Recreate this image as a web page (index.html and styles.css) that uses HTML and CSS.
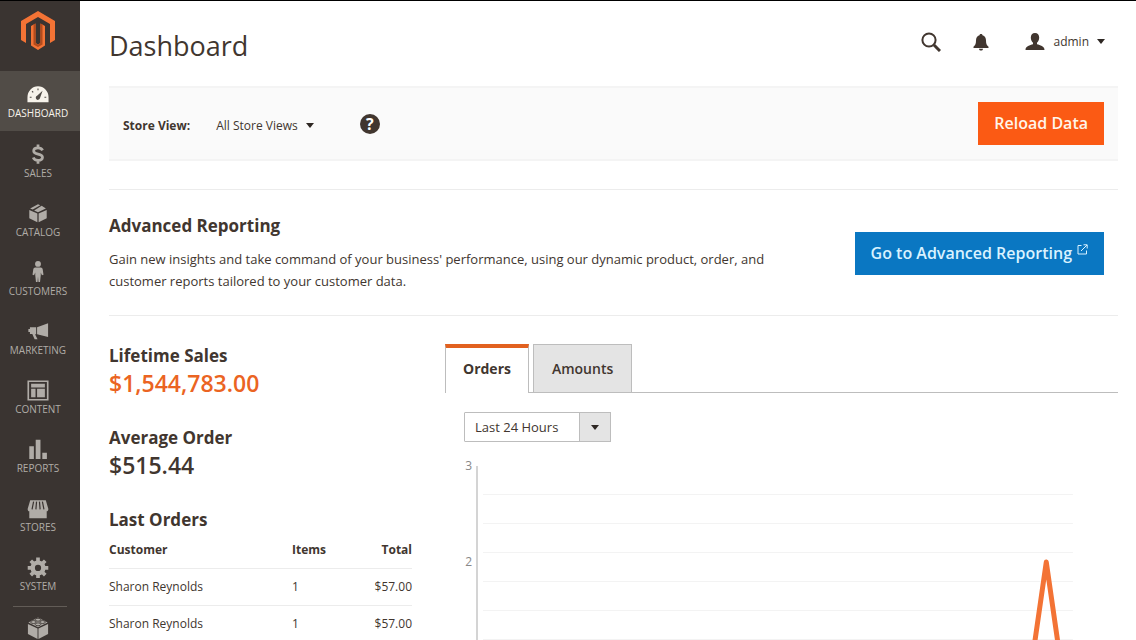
FILE: index.html
```html
<!DOCTYPE html>
<html lang="en">
<head>
<meta charset="utf-8">
<meta name="viewport" content="width=device-width, initial-scale=1">
<title>Dashboard</title>
<link rel="stylesheet" href="styles.css">
</head>
<body>
<div class="app">
  <nav class="sidebar" aria-label="Main menu">
    <a class="logo" href="#" aria-label="Home">
      <svg width="36" height="40" viewBox="0 0 36 40">
        <path fill="#f37335" d="M18 0 35 10V29L30 32V13L18 6 6 13V32L1 29V10Z"/>
        <path fill="#f37335" d="M11 15 15.500 12.500V32L18 33.500 20.500 32V12.500L25 15V34.500L18 39 11 34.500Z"/>
        <path fill="#b34a1c" d="M13.500 13.500 15.500 12.500V32L18 33.500V36L13.500 33.500ZM22.500 13.500 20.500 12.500V32L18 33.500V36L22.500 33.500Z"/>
      </svg>
    </a>
    <ul class="menu">
      <li><a class="menu-item active" href="#">
        <svg class="icon" viewBox="0 0 24 24"><path fill="currentColor" d="M.5 21v-5.500a11.500 12 0 0 1 23 0V21Z"/><path stroke="#514c47" stroke-width="1.200" fill="none" d="M3 15.500h2M5.500 9l1.300 1.300M12 6v2M19 15.500h2"/><path fill="#514c47" d="M17 8.500 14 17a2.300 2.300 0 1 1-3-3Z"/></svg>
        <span>Dashboard</span></a></li>
      <li><a class="menu-item" href="#">
        <svg class="icon" viewBox="0 0 24 24"><path fill="none" stroke="currentColor" stroke-width="3" d="M17 8C16 6 14 5.300 12 5.300 9.300 5.300 7.300 6.600 7.300 8.700c0 4.600 9.600 2.200 9.600 6.800 0 2.200-2 3.400-4.900 3.400-2.500 0-4.400-.9-5.200-3M12 1.500v4M12 18.500v4"/></svg>
        <span>Sales</span></a></li>
      <li><a class="menu-item" href="#">
        <svg class="icon" viewBox="0 0 24 24"><path fill="currentColor" d="M2.500 8.800 11.300 12.600V22L2.500 17.600ZM12.700 12.600 21.500 8.800V17.600L12.700 22ZM12 2.500 14.500 3.600 6.200 8.300 3.400 7.200ZM16 4.200 20.600 7.200 12 11.300 7.800 9.200Z"/></svg>
        <span>Catalog</span></a></li>
      <li><a class="menu-item" href="#">
        <svg class="icon" viewBox="0 0 24 24"><circle cx="12" cy="3.200" r="3.200" fill="currentColor"/><path fill="currentColor" d="M9 7h6c1.500 0 2 1 2.200 2.500l.8 5.500-1.700.5-1.300-3V15.500l-.8 7.500h-1.700L12 17l-.5 6H9.800L9 15.500v-3l-1.300 3-1.700-.5.800-5.500C7 8 7.500 7 9 7Z"/></svg>
        <span>Customers</span></a></li>
      <li><a class="menu-item" href="#">
        <svg class="icon" viewBox="0 0 24 24"><path fill="currentColor" d="M23 3.500v15L11 15.600V8ZM10 8v7.500H8.800l2.700 5.500H8.300L5.800 15.300H3.200V13H1.500V9.800H3.200V8Z"/></svg>
        <span>Marketing</span></a></li>
      <li><a class="menu-item" href="#">
        <svg class="icon" viewBox="0 0 24 24"><path fill="none" stroke="currentColor" stroke-width="1.800" d="M1.400 2.400h21.200v20.200H1.400Z"/><path fill="currentColor" d="M4.500 5.200h15v4h-15ZM4.500 10.700h4.800V19.800H4.500ZM11 10.700h8.500V19.800H11Z"/></svg>
        <span>Content</span></a></li>
      <li><a class="menu-item" href="#">
        <svg class="icon" viewBox="0 0 24 24"><path fill="currentColor" d="M2.500 9h5v14h-5ZM9.500 2h5.200v21H9.500ZM16.700 16h5V23h-5Z"/></svg>
        <span>Reports</span></a></li>
      <li><a class="menu-item" href="#">
        <svg class="icon" viewBox="0 0 24 24"><path fill="currentColor" d="M3.500 3.500h17l2.800 9.500c0 1.600-1 2.500-1.800 2.500v7.700h-19v-7.700C1.500 15.500.7 14.500.7 13Z"/><path fill="none" stroke="#3a3431" stroke-width="1.300" d="M7.200 5 5.500 13.500M10.400 5l-.7 8.500M13.600 5l.7 8.500M16.800 5l1.700 8.500"/></svg>
        <span>Stores</span></a></li>
      <li><a class="menu-item" href="#">
        <svg class="icon" viewBox="0 0 24 24"><circle cx="12" cy="13" r="5.800" fill="none" stroke="currentColor" stroke-width="4.800"/><path stroke="currentColor" stroke-width="4" d="M12 1.500V6M12 20v4M.8 13H5M19 13h4.200M4.100 5.100 7 8M17 18l2.900 2.900M4.100 20.900 7 18M17 8l2.900-2.900"/></svg>
        <span>System</span></a></li>
      <li class="separated"><a class="menu-item" href="#" aria-label="Find Partners">
        <svg class="icon" viewBox="0 0 24 24"><path fill="currentColor" d="M1 7.500 11.500 12.500V24L1 18.500ZM12.500 12.500 23 7.500V18.500L12.500 24ZM12 .5 22.500 6 12 11.300 1.500 6Z"/><g fill="currentColor" stroke="#3a3431" stroke-width=".9"><ellipse cx="12" cy="3" rx="3" ry="1.600"/><ellipse cx="7" cy="5.500" rx="3" ry="1.600"/><ellipse cx="17" cy="5.500" rx="3" ry="1.600"/><ellipse cx="12" cy="8" rx="3" ry="1.600"/></g></svg>
      </a></li>
    </ul>
  </nav>

  <main class="page">
    <header class="page-header">
      <h1>Dashboard</h1>
      <div class="header-tools">
        <button class="tool" type="button" aria-label="Search">
          <svg width="20" height="20" viewBox="0 0 20 20" fill="none" stroke="#41362f"><circle cx="8" cy="8" r="6.600" stroke-width="2"/><path stroke-width="3" d="M13 13l6 6"/></svg>
        </button>
        <button class="tool" type="button" aria-label="Notifications">
          <svg width="16" height="18" viewBox="0 0 16 18" fill="#41362f"><path d="M8 1c.9 0 1.400.500 1.500 1.200C12 3 13 5 13 7.500c0 3 .6 4.800 2.500 6.200V15H.5v-1.300C2.400 12.300 3 10.500 3 7.500 3 5 4 3 6.500 2.200 6.600 1.500 7.100 1 8 1ZM6 15.700h4C10 17 9 17.500 8 17.500S6 17 6 15.700Z"/></svg>
        </button>
        <button class="tool account" type="button">
          <svg width="20" height="18" viewBox="0 0 20 18" fill="#41362f"><path d="M10 0c2.700 0 4.200 1.800 4.200 4.500 0 2.200-.9 4.200-2.200 5.200v1.600c3 1 7.500 1.700 7.500 5.700H.5c0-4 4.500-4.700 7.500-5.700V9.700C6.700 8.700 5.800 6.700 5.800 4.500 5.800 1.800 7.300 0 10 0Z"/></svg>
          <span>admin</span>
          <svg class="caret" viewBox="0 0 8 5"><path d="M0 0h8L4 5Z"/></svg>
        </button>
      </div>
    </header>

    <section class="toolbar">
      <span class="toolbar-label" id="store-label">Store View:</span>
      <button class="store-switch" type="button" aria-describedby="store-label"><span>All Store Views</span><svg class="caret" viewBox="0 0 8 5"><path d="M0 0h8L4 5Z"/></svg></button>
      <a class="help" href="#" aria-label="Help">?</a>
      <button class="btn btn-primary" type="button">Reload Data</button>
    </section>

    <section class="reporting">
      <div class="reporting-text">
        <h2>Advanced Reporting</h2>
        <p>Gain new insights and take command of your business' performance, using our dynamic product, order, and customer reports tailored to your customer data.</p>
      </div>
      <a class="btn btn-blue" href="#">Go to Advanced Reporting
        <svg width="11" height="11" viewBox="0 0 11 11" fill="none" stroke="#d9f2ff"><path d="M4.500 1.500H1v8.500h8.500V6.500M4 7l6-6M6.500.8h3.700v3.700"/></svg>
      </a>
    </section>

    <div class="columns">
      <div class="stats">
        <section class="stat">
          <h2>Lifetime Sales</h2>
          <p class="figure accent">$1,544,783.00</p>
        </section>
        <section class="stat">
          <h2>Average Order</h2>
          <p class="figure">$515.44</p>
        </section>
        <section>
          <h2>Last Orders</h2>
          <table class="orders">
            <thead><tr><th>Customer</th><th class="items">Items</th><th class="total">Total</th></tr></thead>
            <tbody>
              <tr><td>Sharon Reynolds</td><td>1</td><td class="total">$57.00</td></tr>
              <tr><td>Sharon Reynolds</td><td>1</td><td class="total">$57.00</td></tr>
            </tbody>
          </table>
        </section>
      </div>

      <section class="diagram">
        <div class="tabs" role="tablist">
          <button class="tab selected" type="button" role="tab" aria-selected="true">Orders</button>
          <button class="tab" type="button" role="tab" aria-selected="false">Amounts</button>
        </div>
        <div class="period">
          <select aria-label="Period">
            <option>Last 24 Hours</option>
            <option>Last 7 Days</option>
            <option>Current Month</option>
          </select>
          <span class="period-arrow"><svg class="caret" viewBox="0 0 8 5"><path d="M0 0h8L4 5Z"/></svg></span>
        </div>
        <div class="chart">
          <div class="scale"><span>3</span><span>2</span></div>
          <svg class="plot" viewBox="0 0 640 290" preserveAspectRatio="none">
            <path class="grid" d="M7 28.500H595M7 57.500H595M7 86.500H595M7 115.500H595M7 144.500H595M7 173.500H595M7 202.500H595M7 231.500H595M7 260.500H595"/>
            <path class="axis" d="M1 0V290"/>
            <path class="series" d="M7 288H541L568.500 96 596 288"/>
          </svg>
        </div>
      </section>
    </div>
  </main>
</div>
</body>
</html>
```
FILE: styles.css
```css
* { box-sizing: border-box; }

body {
  margin: 0;
  font-family: "Open Sans", "Noto Sans", sans-serif;
  font-size: 13px;
  color: #41362f;
  background: #fff;
}

h1, h2, p, ul { margin: 0; padding: 0; }
button, select { font: inherit; color: inherit; }
button { border: 0; background: none; padding: 0; }
a { color: inherit; text-decoration: none; }
svg { display: block; }

.app {
  display: flex;
  height: 100vh;
  overflow: hidden;
  border-top: 1px solid #000;
}

/* Sidebar */
.sidebar {
  flex: none;
  width: 80px;
  background: #3a3431;
}
.logo {
  display: flex;
  justify-content: center;
  height: 70px;
  padding: 10px 4px 0 0;
}
.menu { list-style: none; }
.menu-item {
  display: flex;
  flex-direction: column;
  align-items: center;
  gap: 1px;
  height: 59px;
  padding: 12px 4px 0 0;
  font-size: 10px;
  line-height: 14px;
  text-transform: uppercase;
  color: #b0aca7;
}
.menu-item.active { height: 60px; background: #514c47; color: #f7f3eb; }
.icon { width: 22px; height: 22px; }
.separated { margin: 3px 13px 0; border-top: 1px solid #625c57; }
.separated .menu-item { padding-top: 10px; }

/* Page */
.page {
  flex: 1;
  min-width: 0;
  padding: 0 18px 0 29px;
}
.page-header {
  display: flex;
  align-items: center;
  justify-content: space-between;
  height: 85px;
  padding-top: 4px;
}
h1 { font-size: 27px; font-weight: 400; line-height: 36px; }
.header-tools { display: flex; align-items: center; gap: 32px; padding: 0 13px 8px 0; }
.tool { display: flex; align-items: center; }
.account { gap: 8px; padding-left: 4px; font-size: 12px; }
.caret { width: 8px; height: 5px; fill: #2e2723; }

.toolbar {
  display: flex;
  align-items: center;
  height: 75px;
  padding: 0 14px;
  border-top: 2px solid #f4f4f4;
  border-bottom: 2px solid #f4f4f4;
  background: #fafafa;
  font-size: 12px;
}
.toolbar-label { padding-top: 3px; font-weight: 700; }
.store-switch { display: flex; align-items: center; gap: 8px; margin: 0 46px 0 26px; padding-top: 3px; }
.help {
  width: 20px;
  height: 20px;
  border-radius: 50%;
  background: #41362f;
  color: #fff;
  font-size: 16px;
  font-weight: 700;
  line-height: 20px;
  text-align: center;
}

.btn {
  display: flex;
  flex: none;
  gap: 5px;
  height: 43px;
  padding: 0 16px;
  font-size: 16px;
  font-weight: 600;
  line-height: 43px;
}
.btn svg { margin-top: 12px; }
.btn-primary { margin-left: auto; background: #fb5a14; color: #fff5ea; }
.btn-blue { background: #0a77c2; color: #d9f2ff; }

h2 { font-size: 17px; font-weight: 700; line-height: 24px; }

.reporting {
  display: flex;
  align-items: flex-start;
  justify-content: space-between;
  gap: 40px;
  margin-top: 28px;
  padding: 24px 14px 23px 0;
  border-top: 1px solid #ececec;
  border-bottom: 1px solid #ececec;
}
.reporting .btn { margin-top: 18px; }
.reporting-text p { margin-top: 10px; font-size: 13px; line-height: 22px; }

.columns { display: flex; gap: 33px; padding-top: 28px; }
.stats { flex: 0 0 303px; }
.stat { margin-bottom: 28px; }
.figure { font-size: 23px; font-weight: 600; line-height: 30px; }
.accent { color: #eb6422; }

.orders { width: 100%; border-collapse: collapse; table-layout: fixed; font-size: 12px; line-height: 16px; }
.orders th, .orders td { padding: 10px 0; border-bottom: 1px solid #ececec; text-align: left; font-weight: 400; }
.orders th { font-weight: 700; }
.orders .items { width: 60px; }
.orders .total { width: 60px; text-align: right; }

.diagram { flex: 1; min-width: 0; }
.tabs { display: flex; gap: 4px; border-bottom: 1px solid #bdbdbd; }
.tab {
  height: 48px;
  padding: 0 18px;
  border: 1px solid #bdbdbd;
  border-bottom: 0;
  background: #e4e4e4;
  font-size: 14px;
  font-weight: 600;
}
.tab.selected {
  height: 49px;
  margin-bottom: -1px;
  padding: 0 17px 4px;
  border-top: 4px solid #e2611f;
  background: #fff;
  font-weight: 700;
}

.period { display: grid; width: 147px; height: 30px; margin: 19px 0 24px 19px; }
.period > * { grid-area: 1 / 1; }
.period select { appearance: none; padding: 0 10px; border: 1px solid #bdbdbd; border-radius: 1px; background: #fff; }
.period-arrow {
  display: flex;
  align-items: center;
  justify-content: center;
  justify-self: end;
  width: 32px;
  border: 1px solid #bdbdbd;
  background: #e4e4e4;
  pointer-events: none;
}

.chart { display: flex; }
.scale { width: 31px; padding-right: 4px; text-align: right; font-size: 12px; line-height: 16px; color: #888; }
.scale span { display: block; height: 16px; margin: -8px 0 88px; }
.plot { flex: 1; min-width: 0; height: 290px; }
.plot path { fill: none; vector-effect: non-scaling-stroke; }
.grid { stroke: #f3f3f3; }
.axis { stroke: #d4d4d4; stroke-width: 2; }
.series { stroke: #f37335; stroke-width: 5; stroke-linejoin: round; }
```
